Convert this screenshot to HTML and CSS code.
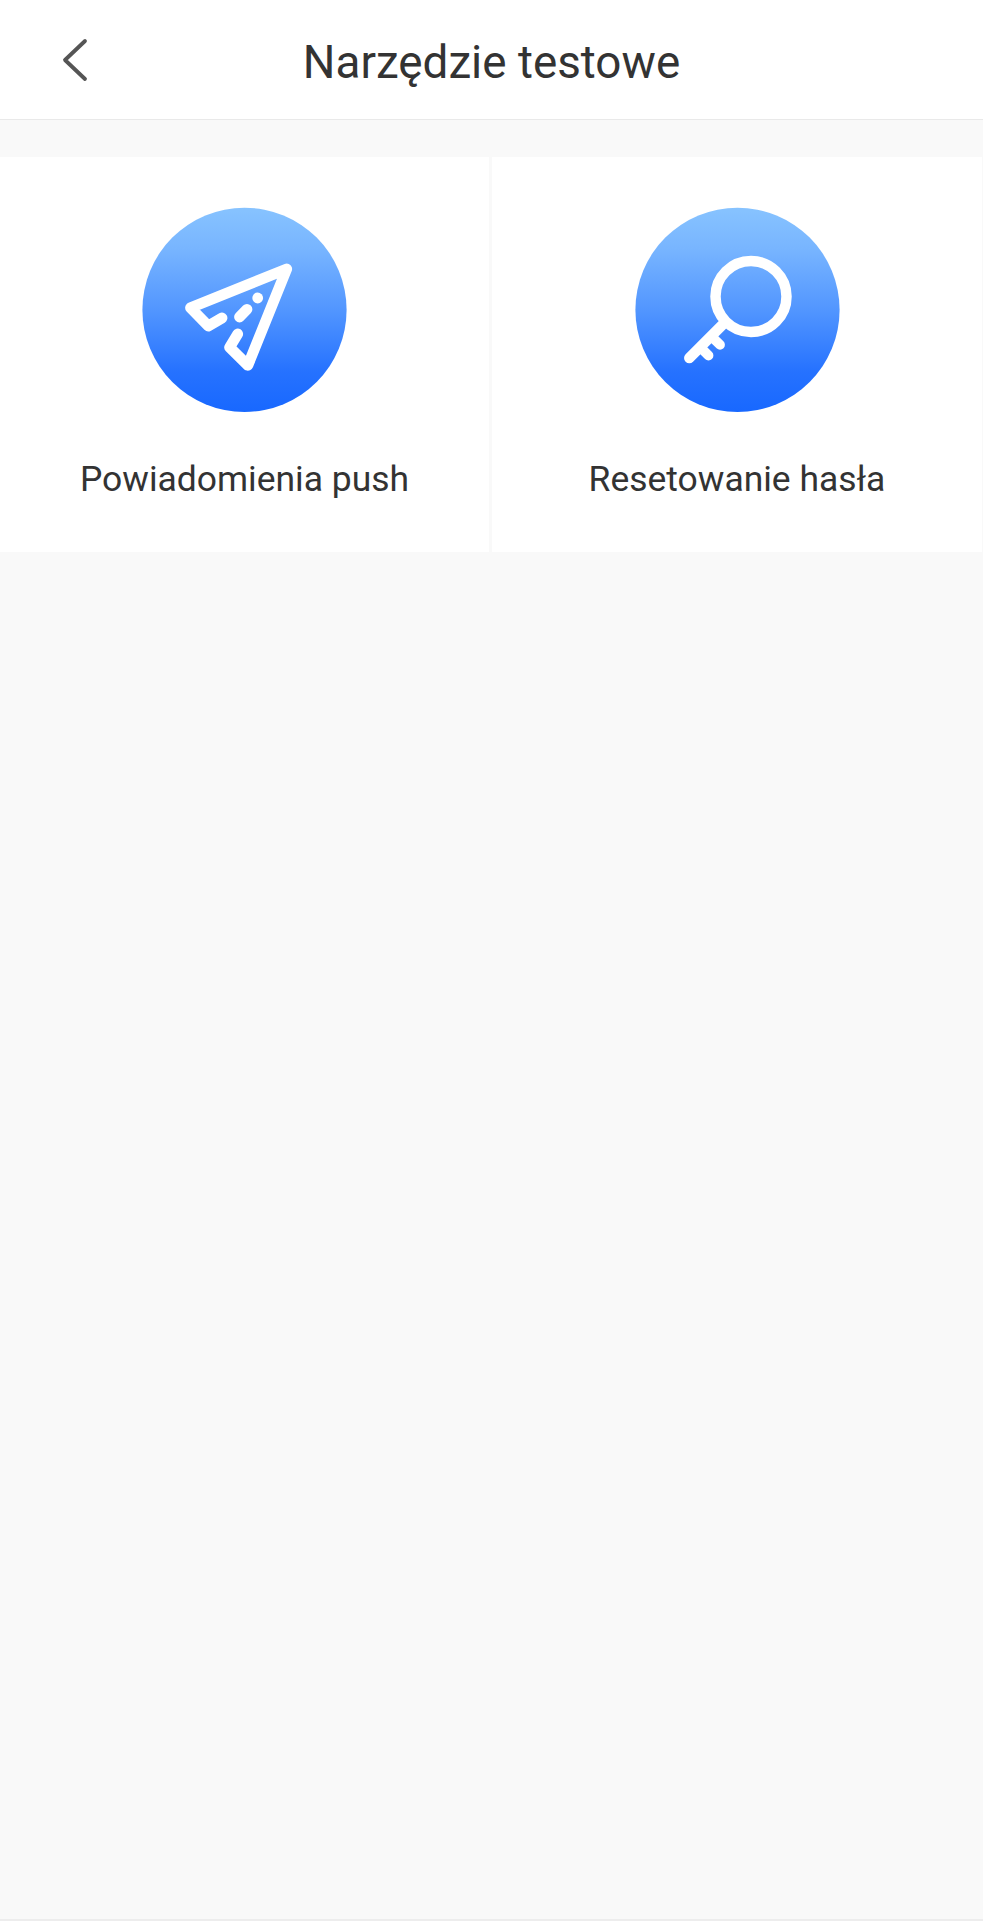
FILE: index.html
```html
<!DOCTYPE html>
<html lang="pl">
<head>
  <meta charset="UTF-8">
  <meta name="viewport" content="width=device-width, initial-scale=1.0">
  <title>Narzędzie testowe</title>
  <link rel="stylesheet" href="styles.css">
</head>
<body>
  <div class="page">
    <header class="header">
      <a class="back" href="#" aria-label="Wstecz">
        <svg width="26" height="44" viewBox="0 0 26 44">
          <path d="M23 3 L3 22 L23 41" fill="none" stroke="#555" stroke-width="3.8" stroke-linecap="round" stroke-linejoin="round"/>
        </svg>
      </a>
      <h1 class="title">Narzędzie testowe</h1>
    </header>
    <main class="tools">
      <a class="tool" href="#">
        <svg class="icon" viewBox="0 0 205 205">
          <defs>
            <linearGradient id="blue" x1="0" y1="0" x2="0" y2="1">
              <stop offset="0" stop-color="#87c3ff"/>
              <stop offset="0.2" stop-color="#78b5ff"/>
              <stop offset="0.5" stop-color="#5296ff"/>
              <stop offset="0.8" stop-color="#2672ff"/>
              <stop offset="1" stop-color="#1868ff"/>
            </linearGradient>
          </defs>
          <circle cx="102.5" cy="102.8" r="102.1" fill="url(#blue)"/>
          <g fill="none" stroke="#fff" stroke-width="10.8" stroke-linecap="round" stroke-linejoin="round">
            <path d="M80 111 L66.3 119 L48.5 100.8 L144.7 62 L105.9 158.3 L87.7 140.3 L95.7 127"/>
            <path d="M97.5 110 L105 102.3"/>
          </g>
          <circle cx="115.7" cy="91" r="5.4" fill="#fff"/>
        </svg>
        <span class="label">Powiadomienia push</span>
      </a>
      <a class="tool" href="#">
        <svg class="icon" viewBox="0 0 205 205">
          <circle cx="102.5" cy="102.8" r="102.1" fill="url(#blue)"/>
          <g fill="none" stroke="#fff" stroke-width="10.5" stroke-linecap="round">
            <circle cx="116" cy="89.5" r="35.5"/>
            <path d="M89 116.2 L54.3 151"/>
            <path d="M77 130 L85 137.8 M66 141 L73.5 148.5" stroke-width="9.8"/>
          </g>
        </svg>
        <span class="label">Resetowanie hasła</span>
      </a>
    </main>
  </div>
</body>
</html>
```
FILE: styles.css
```css
* {
  box-sizing: border-box;
}
body {
  margin: 0;
  background: #fff;
  color: #333;
  font-family: Roboto, "Noto Sans", sans-serif;
}
a {
  color: inherit;
  text-decoration: none;
}
.page {
  height: 1921px;
  background: #f9f9f9;
  border-bottom: 2px solid #ededed;
}
.header {
  display: grid;
  grid-template-columns: 120px 1fr 120px;
  align-items: center;
  height: 120px;
  background: #fff;
  border-bottom: 1px solid #e9e9e9;
}
.back {
  display: flex;
  padding-left: 62px;
}
.title {
  margin: 0;
  padding-top: 6px;
  font-size: 45.8px;
  font-weight: 400;
  line-height: 60px;
  text-align: center;
  white-space: nowrap;
}
.tools {
  display: grid;
  grid-template-columns: 489px 490px;
  gap: 3px;
  margin-top: 37px;
}
.tool {
  display: flex;
  flex-direction: column;
  align-items: center;
  height: 395px;
  padding-top: 50px;
  background: #fff;
}
.icon {
  width: 205px;
  height: 205px;
}
.label {
  margin-top: 44px;
  font-size: 35.45px;
  line-height: 46px;
  white-space: nowrap;
}
```
